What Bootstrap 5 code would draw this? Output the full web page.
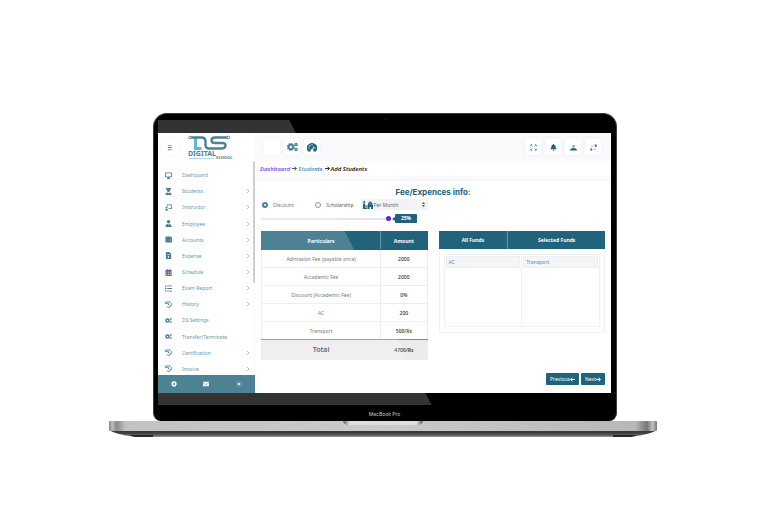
<!DOCTYPE html>
<html lang="en">
<head>
<meta charset="utf-8">
<meta name="viewport" content="width=device-width, initial-scale=1">
<title>Digital School – Add Students</title>
<link href="https://cdn.jsdelivr.net/npm/bootstrap@5.3.0/dist/css/bootstrap.min.css" rel="stylesheet">
<style>
:root{--teal:#20637a;--line:#ececf1}
body{font:5px/8px "Noto Sans","Open Sans",sans-serif;color:#555;background:#fff}
svg{display:block;flex:none}
.ico{width:7px;height:7px;fill:currentColor}
.stage{padding-top:113px}
.laptop{width:calc(100% - 220px);min-width:520px;margin-left:109px}
.lid{margin:0 40px 0 44px;padding:19px 5px 0 4px;background:#000;border:1px solid #3c3c3c;border-width:1px 1px 0;border-radius:14px 14px 8px 8px}
.cam{top:4px;left:50%;width:2px;height:2px;background:#15152a}
.glare{top:6px;left:4px;width:calc(59% + 1px);bottom:16px;background:rgba(255,255,255,.2);clip-path:polygon(0 0,48% 0,100% 100%,0 100%);pointer-events:none;z-index:5}
.screen{min-height:260px;background:#fff}
.brand{height:25px}
.side{width:97px;height:260px;flex:none}
.side-head{height:28px}
.side-nav{padding-top:6px;border-right:2px solid #fafafa}
.side-nav ul{margin-bottom:-2px}
.side-nav a{color:#3a7f99;text-decoration:none;padding:0 3px 0 7px}
.side-nav a .ico{margin-right:10px;color:var(--teal)}
.side-nav .chev{width:4px;height:4px;margin-left:auto;fill:none;stroke:#6fa0b2;stroke-width:1.500}
.thumb{top:28px;right:0;width:2px;height:122px;background:#c4c4c4;border-radius:1px}
.side-foot{height:18px;background:var(--teal);color:#fff}
.plain{border:0;padding:0;background:none;color:inherit}
.plain .ico{width:6px;height:6px}
.tbar{height:28px;background:#fafafd;padding:0 10px 0 9px}
.tile{width:16px;height:16px;border:0;border-radius:2px;padding:0;background:#fff;color:var(--teal);box-shadow:0 0 4px rgba(90,90,160,.07)}
.tile .gears{width:11px;height:10px}
.tile .gauge{width:10px;height:9px}
.crumbs{height:15px;padding-left:5px;font-size:6px;font-weight:600;font-style:italic;color:#222}
.crumbs a{text-decoration:none}
.crumbs .ico{width:5px;height:5px;margin:0 1px 0 2px}
.c1{color:#5c24f5}.c2{color:#1d8da5}
.gapband{height:5px;background:#fafafc;border-bottom:1px solid #f3f3f6}
.body-pad{padding:6px 6px 0}
.pair{gap:11px}
.title{font:700 8px/10px Inter,"Open Sans",sans-serif;color:var(--teal);margin:0 0 2px}
.pane{flex:1 1 0;min-width:0}
.opts{height:11px}
.opts label:first-child{margin-left:1px}
.opts label+label{margin:0 7px 0 auto}
.opts input[type=radio]{appearance:none;width:6px;height:6px;margin:0 5px 0 0;border:1px solid #777;border-radius:50%;background:#fff}
.opts input[type=radio]:checked{border:2px solid var(--teal)}
.pick{background:#f3f3f5;width:67px;height:11px;padding:0 3px 0 2px;color:var(--teal);border-radius:1px}
.pick select{appearance:none;border:0;background:none;padding:0 0 0 1px;font:inherit;color:#666;min-width:0}
.pick .tall{width:10px;height:8px}
.slide{height:17px;margin-bottom:4px}
.slide input{appearance:none;height:2px;background:#e2e4ea;border-radius:1px;margin:0;min-width:0;width:130px}
.slide input::-webkit-slider-thumb{appearance:none;width:5px;height:5px;border-radius:50%;background:#5a1cff}
.tipbox{background:var(--teal);color:#fff;font-weight:700;width:22px;height:9px;line-height:9px;border-radius:1px;margin-left:4px}
.tipbox::before{content:"";position:absolute;left:-3px;top:3px;border:solid transparent;border-width:2px 3px 2px 0;border-right-color:var(--teal)}
.fees{border-collapse:collapse;width:100%;text-align:center}
.fees th,.fees td{padding:0;height:18px;border:1px solid var(--line)}
.fees .wide{width:72%}
.fees thead th{background:var(--teal);color:#fff;border-color:var(--teal);border-right-color:#6b98a8;font-weight:700}
.fees thead th:last-child{border-right-color:var(--teal)}
.fees td+td{color:#333;font-weight:500}
.fees .last td{border-bottom-color:#8a8a8a}
.fees .sum td,.fees .sum th{background:#ebebec;height:20px}
.fees .sum th{font-weight:600;font-size:7px;color:#444}
.fees .sum td{font-weight:600;color:#333}
.funds-h{background:var(--teal);color:#fff;font-weight:700;height:18px}
.funds-h>div:first-child{flex:0 0 42%;border-right:1px solid #6b98a8}
.funds-b{border:1px solid #f1f1f3;border-top:0;padding:5px 4px}
.drop{flex:1;height:73px;border:1px solid #f1f1f3;padding:1px}
.drop+.drop{border-left:0}
.chip{background:#f5f5f6;border:1px solid #eee;height:12px;line-height:11px;padding-left:2px;color:#4a8cd0}
.acts{padding:0 6px 8px;gap:2px}
.go{height:12px;border:0;border-radius:1px;background:var(--teal);color:#fff;padding:0 4px;display:flex;align-items:center}
.go .ico{width:5px;height:5px}
.maker{height:28px;padding-top:16px;font:5px/10px Inter,sans-serif;color:#ccc}
.base{width:100%;height:17px}
</style>
</head>
<body>
<svg class="d-none" aria-hidden="true">
<symbol id="i-screen" viewBox="0 0 16 16"><path d="M1 1h14a1 1 0 0 1 1 1v9a1 1 0 0 1-1 1h-5l.5 2H12v2H4v-2h1.500L6 12H1a1 1 0 0 1-1-1V2a1 1 0 0 1 1-1zm1 2v7h12V3z"/></symbol>
<symbol id="i-grad" viewBox="0 0 16 16"><path d="M2 0h12v3h-2v2a4 4 0 0 1-8 0V3H2zM1 16c0-5 3-6 5-6l2 2 2-2c2 0 5 1 5 6z"/></symbol>
<symbol id="i-teach" viewBox="0 0 18 16"><path d="M5 0h13v12H9v-2h7V2H7v3H5z"/><circle cx="4" cy="8" r="2.700"/><path d="M0 16c0-4 2-5 4-5s4 1 4 5z"/></symbol>
<symbol id="i-user" viewBox="0 0 16 16"><circle cx="8" cy="4" r="4"/><path d="M1 16c0-5 2-7 5-7l2 2 2-2c3 0 5 2 5 7z"/></symbol>
<symbol id="i-wallet" viewBox="0 0 16 16"><path fill-rule="evenodd" d="M1 1h13v2h2v12H1zM12 8v2h2V8z"/></symbol>
<symbol id="i-file" viewBox="0 0 16 16"><path fill-rule="evenodd" d="M2 0h8l4 4v12H2zM5 5v1h6V5zm2 4v4h2V9z"/></symbol>
<symbol id="i-cal" viewBox="0 0 16 16"><path fill="#473a75" fill-rule="evenodd" d="M1 2h3V0h2v2h4V0h2v2h3v14H1zm2 4v2h2V6zm4 0v2h2V6zm4 0v2h2V6zM3 11v2h2v-2zm4 0v2h2v-2zm4 0v2h2v-2z"/></symbol>
<symbol id="i-list" viewBox="0 0 16 16"><path d="M0 1h3v3H0zm5 0h11v2H5zM0 6h3v3H0zm5 1h11v2H5zm-5 5h3v3H0zm5 1h11v2H5z"/></symbol>
<symbol id="i-hist" viewBox="0 0 16 16"><path fill="none" stroke="currentColor" stroke-width="2" d="M2 1v5h5M2 6a6.500 6.500 0 1 1 2 7M8 5v4l3 1"/></symbol>
<symbol id="i-gears" viewBox="0 0 20 16"><circle cx="7" cy="8" r="4" fill="none" stroke="currentColor" stroke-width="3.500"/><circle cx="7" cy="8" r="6" fill="none" stroke="currentColor" stroke-width="2.500" stroke-dasharray="2.700 2"/><g fill="none" stroke="currentColor"><circle cx="16.500" cy="3.500" r="2" stroke-width="2.500"/><circle cx="16.500" cy="12.500" r="2" stroke-width="2.500"/></g></symbol>
<symbol id="i-chev" viewBox="0 0 8 8"><path d="M2 0l4 4-4 4"/></symbol>
<symbol id="i-gauge" viewBox="0 0 18 16"><path fill-rule="evenodd" d="M9 0a9 9 0 0 1 8 14l-1 1h-5a2.500 2.500 0 0 0 0-3l2-6-1-.5-2.500 5.500a2.500 2.500 0 0 0-2.500 4H2l-1-1A9 9 0 0 1 9 0zM8 2v2h2V2zM4 4v2h2V4zM2.500 8v2h2V8zm11 0v2h2V8z"/></symbol>
<symbol id="i-full" viewBox="0 0 16 16"><path fill="none" stroke="currentColor" stroke-width="2" d="M2 5V2h3m6 0h3v3m0 6v3h-3m-6 0H2v-3"/><path fill="none" stroke="currentColor" stroke-width="2" opacity=".6" d="M5 5l1.500 1.500M11 5L9.500 6.500M5 11l1.500-1.500M11 11L9.500 9.500"/></symbol>
<symbol id="i-bell" viewBox="0 0 16 16"><path d="M7 0h2v1c3 1 4 3 4 7l2 4H1l2-4c0-4 1-6 4-7zM6 13h4c0 3-4 3-4 0z"/></symbol>
<symbol id="i-man" viewBox="0 0 16 16"><circle cx="8" cy="5" r="3" opacity=".55"/><path d="M0 15c0-4 3-6 8-6s8 2 8 6z"/></symbol>
<symbol id="i-swap" viewBox="0 0 16 16"><path d="M11 1h4v5h-4zM1 10h4v5H1z"/><path opacity=".4" d="M2 4h6v2H2zm6 7h6v2H8z"/></symbol>
<symbol id="i-right" viewBox="0 0 16 16"><path fill="none" stroke="currentColor" stroke-width="3" d="M0 8h14M8 2l6 6-6 6"/></symbol>
<symbol id="i-left" viewBox="0 0 16 16"><path fill="none" stroke="currentColor" stroke-width="3" d="M16 8H2M8 2L2 8l6 6"/></symbol>
<symbol id="i-cog" viewBox="0 0 16 16"><circle cx="8" cy="8" r="4.500" fill="none" stroke="currentColor" stroke-width="4"/><circle cx="8" cy="8" r="7" fill="none" stroke="currentColor" stroke-width="2" stroke-dasharray="3 2.500"/></symbol>
<symbol id="i-mail" viewBox="0 0 16 16"><path d="M0 2h16v2L8 9 0 4zm0 3.500l8 5 8-5V14H0z"/></symbol>
<symbol id="i-power" viewBox="0 0 16 16"><circle cx="8" cy="8" r="3"/><circle cx="8" cy="8" r="6.500" fill="none" stroke="currentColor" opacity=".5" stroke-width="1.500"/></symbol>
<symbol id="i-school" viewBox="0 0 20 16"><circle cx="2.500" cy="2" r="2"/><path d="M0 5h4v4h4v2H4v2h4v3H0z"/><path fill-rule="evenodd" d="M14 0l5 5v3h1v8h-4v-4h-3v4H9V8h1V5zM13 5v2h2V5z"/></symbol>
</svg>

<main class="stage">
<div class="laptop">
<div class="lid position-relative">
<span class="cam position-absolute rounded-circle"></span>
<div class="screen d-flex">
<aside class="side d-flex flex-column position-relative">
<div class="side-head d-flex align-items-center">
<button class="tile ms-1 me-2 d-flex align-items-center justify-content-center" aria-label="Toggle menu"><svg class="ico" viewBox="0 0 16 16"><path d="M2 2h7v2H2zm8 0h4v1h-4zM2 7h9v2H2zm0 5h6v2H2zm7 0h3v1H9z"/></svg></button>
<svg class="brand" width="49" viewBox="0 0 49 25" role="img" aria-label="DS Digital School">
<g fill="none" stroke="#20637a" stroke-width="2.400"><path stroke="#35a5d0" stroke-width="3" d="M9.500 3v10.500h6"/><path d="M4 2.500h11.500q4 0 4 4V10q0 3.500 4 3.500H35q4.500 0 4.500-3T35 8h-6q-3.500 0-3.500-2.700T29 2.500h13"/></g>
<g fill="#fff" stroke="#20637a" stroke-width=".9"><circle cx="4" cy="2.500" r="1.300"/><circle cx="42.500" cy="2.500" r="1.300"/></g>
<text x="2" y="21" font-size="7" font-weight="700" font-family="Noto Sans, sans-serif" fill="#20637a">DIGITAL</text>
<text x="30" y="24" font-size="4" font-weight="700" font-family="Noto Sans, sans-serif" fill="#20637a">SCHOOL</text>
<path stroke="#6cc3dc" stroke-width=".7" d="M3 23.500h25"/></svg>
</div>
<span class="thumb position-absolute"></span>
<nav class="side-nav flex-fill d-flex flex-column overflow-hidden" aria-label="Main">
<ul class="list-unstyled flex-fill d-flex flex-column">
<li class="flex-fill d-flex"><a class="d-flex align-items-center w-100" href="#"><svg class="ico"><use href="#i-screen"/></svg>Dashboard</a></li>
<li class="flex-fill d-flex"><a class="d-flex align-items-center w-100" href="#"><svg class="ico"><use href="#i-grad"/></svg>Students<svg class="chev"><use href="#i-chev"/></svg></a></li>
<li class="flex-fill d-flex"><a class="d-flex align-items-center w-100" href="#"><svg class="ico"><use href="#i-teach"/></svg>Instructor<svg class="chev"><use href="#i-chev"/></svg></a></li>
<li class="flex-fill d-flex"><a class="d-flex align-items-center w-100" href="#"><svg class="ico"><use href="#i-user"/></svg>Employee<svg class="chev"><use href="#i-chev"/></svg></a></li>
<li class="flex-fill d-flex"><a class="d-flex align-items-center w-100" href="#"><svg class="ico"><use href="#i-wallet"/></svg>Accounts<svg class="chev"><use href="#i-chev"/></svg></a></li>
<li class="flex-fill d-flex"><a class="d-flex align-items-center w-100" href="#"><svg class="ico"><use href="#i-file"/></svg>Expense<svg class="chev"><use href="#i-chev"/></svg></a></li>
<li class="flex-fill d-flex"><a class="d-flex align-items-center w-100" href="#"><svg class="ico"><use href="#i-cal"/></svg>Schedule<svg class="chev"><use href="#i-chev"/></svg></a></li>
<li class="flex-fill d-flex"><a class="d-flex align-items-center w-100" href="#"><svg class="ico"><use href="#i-list"/></svg>Exam Report<svg class="chev"><use href="#i-chev"/></svg></a></li>
<li class="flex-fill d-flex"><a class="d-flex align-items-center w-100" href="#"><svg class="ico"><use href="#i-hist"/></svg>History<svg class="chev"><use href="#i-chev"/></svg></a></li>
<li class="flex-fill d-flex"><a class="d-flex align-items-center w-100" href="#"><svg class="ico"><use href="#i-gears"/></svg>DS Settings</a></li>
<li class="flex-fill d-flex"><a class="d-flex align-items-center w-100" href="#"><svg class="ico"><use href="#i-gears"/></svg>Transfer/Terminate</a></li>
<li class="flex-fill d-flex"><a class="d-flex align-items-center w-100" href="#"><svg class="ico"><use href="#i-hist"/></svg>Certification<svg class="chev"><use href="#i-chev"/></svg></a></li>
<li class="flex-fill d-flex"><a class="d-flex align-items-center w-100" href="#"><svg class="ico"><use href="#i-hist"/></svg>Invoice<svg class="chev"><use href="#i-chev"/></svg></a></li>
</ul>
</nav>
<div class="side-foot d-flex justify-content-around align-items-center">
<button class="plain" aria-label="Settings"><svg class="ico"><use href="#i-cog"/></svg></button>
<button class="plain" aria-label="Messages"><svg class="ico"><use href="#i-mail"/></svg></button>
<button class="plain" aria-label="Power"><svg class="ico"><use href="#i-power"/></svg></button>
</div>
</aside>

<section class="flex-fill d-flex flex-column">
<header class="tbar d-flex align-items-center gap-1">
<button class="tile" aria-label="Blank"></button>
<button class="tile d-flex align-items-center justify-content-center" aria-label="Settings"><svg class="ico gears"><use href="#i-gears"/></svg></button>
<button class="tile d-flex align-items-center justify-content-center" aria-label="Dashboard"><svg class="ico gauge"><use href="#i-gauge"/></svg></button>
<button class="tile d-flex align-items-center justify-content-center ms-auto" aria-label="Full screen"><svg class="ico"><use href="#i-full"/></svg></button>
<button class="tile d-flex align-items-center justify-content-center" aria-label="Alerts"><svg class="ico"><use href="#i-bell"/></svg></button>
<button class="tile d-flex align-items-center justify-content-center" aria-label="Profile"><svg class="ico"><use href="#i-man"/></svg></button>
<button class="tile d-flex align-items-center justify-content-center" aria-label="Switch"><svg class="ico"><use href="#i-swap"/></svg></button>
</header>
<nav class="crumbs d-flex align-items-center" aria-label="Breadcrumb"><a class="c1" href="#">Dashboard</a><svg class="ico"><use href="#i-right"/></svg><a class="c2" href="#">Students</a><svg class="ico"><use href="#i-right"/></svg><span>Add Students</span></nav>
<div class="gapband"></div>
<div class="body-pad">
<h1 class="title text-center">Fee/Expences info:</h1>
<div class="pair d-flex">
<div class="pane">
<div class="opts d-flex align-items-center">
<label class="d-flex align-items-center"><input type="radio" name="kind" checked>Discount</label>
<label class="d-flex align-items-center"><input type="radio" name="kind">Scholarship</label>
<div class="pick d-flex align-items-center"><svg class="ico tall"><use href="#i-school"/></svg><select class="flex-fill" aria-label="Period"><option>Per Month</option></select><svg width="3" height="5" viewBox="0 0 6 10" fill="#555"><path d="M3 0l3 4H0zM0 6h6l-3 4z"/></svg></div>
</div>
<div class="slide d-flex align-items-center"><input type="range" min="0" max="100" value="100" aria-label="Discount percent"><output class="tipbox position-relative text-center">25%</output></div>
</div>
<div class="pane"></div>
</div>
<div class="pair d-flex align-items-start">
<div class="pane">
<table class="fees">
<colgroup><col class="wide"><col></colgroup>
<thead><tr><th scope="col">Particulars</th><th scope="col">Amount</th></tr></thead>
<tbody>
<tr><td>Admission Fee (payable once)</td><td>2000</td></tr>
<tr><td>Accademic Fee</td><td>2000</td></tr>
<tr><td>Discount (Accademic Fee)</td><td>0%</td></tr>
<tr><td>AC</td><td>200</td></tr>
<tr class="last"><td>Transport</td><td>500/Rs</td></tr>
<tr class="sum"><th scope="row">Total</th><td>4700/Rs</td></tr>
</tbody>
</table>
</div>
<div class="pane">
<div class="funds-h d-flex text-center"><div class="d-flex align-items-center justify-content-center">All Funds</div><div class="flex-fill d-flex align-items-center justify-content-center">Selected Funds</div></div>
<div class="funds-b d-flex"><div class="drop"><div class="chip">AC</div></div><div class="drop"><div class="chip">Transport</div></div></div>
</div>
</div>
</div>
<div class="acts d-flex justify-content-end mt-auto"><button class="go">Previous<svg class="ico"><use href="#i-left"/></svg></button><button class="go">Next<svg class="ico"><use href="#i-right"/></svg></button></div>
</section>
</div>
<div class="glare position-absolute"></div>
<div class="maker text-center">MacBook Pro</div>
</div>
<svg class="base" viewBox="0 0 548 17" preserveAspectRatio="none" aria-hidden="true">
<defs>
<linearGradient id="metal"><stop offset="0" stop-color="#888"/><stop offset=".006" stop-color="#bbb"/><stop offset=".014" stop-color="#8a8a8a"/><stop offset=".03" stop-color="#c2c2c2"/><stop offset=".5" stop-color="#cacaca"/><stop offset=".96" stop-color="#b8b8b8"/><stop offset=".982" stop-color="#777"/><stop offset=".992" stop-color="#c4c4c4"/><stop offset="1" stop-color="#777"/></linearGradient>
<linearGradient id="under" x2="0" y2="1"><stop offset="0" stop-color="#333"/><stop offset=".6" stop-color="#444"/><stop offset=".8" stop-color="#777"/><stop offset="1" stop-color="#222"/></linearGradient>
<linearGradient id="lip"><stop offset="0" stop-color="#555"/><stop offset=".08" stop-color="#ddd"/><stop offset=".92" stop-color="#ddd"/><stop offset="1" stop-color="#555"/></linearGradient>
</defs>
<path fill="url(#under)" d="M0 9q6 4 24 6.500h500q18-2.500 24-6.500z"/>
<path fill="#111" opacity=".8" d="M20 14h24v2H26zM528 14h-24v2h18z"/>
<path fill="url(#metal)" d="M0 1q0-1 1-1h546q1 0 1 1v8l-2 1H2L0 9z"/>
<path fill="url(#lip)" d="M234 0h80q-1 4-5 4h-70q-4 0-5-4z"/>
</svg>
</div>
</main>
<script src="https://cdn.jsdelivr.net/npm/bootstrap@5.3.0/dist/js/bootstrap.bundle.min.js"></script>
</body>
</html>
